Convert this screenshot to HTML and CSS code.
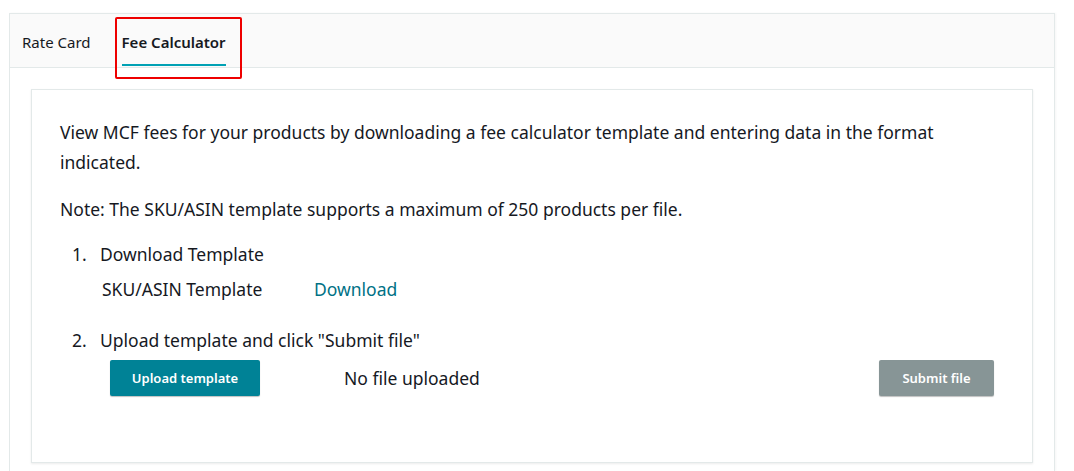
FILE: index.html
```html
<!DOCTYPE html>
<html>
<head>
<meta charset="utf-8">
<link rel="stylesheet" href="styles.css">
</head>
<body>
<div class="card">
  <div class="tabs">
    <div class="tab">Rate Card</div>
    <div class="tab active">Fee Calculator</div>
  </div>
  <div class="panel">
    <div class="box">
      <p class="intro">View MCF fees for your products by downloading a fee calculator template and entering data in the format indicated.</p>
      <p class="note">Note: The SKU/ASIN template supports a maximum of 250 products per file.</p>
      <div class="step">
        <span class="num">1.</span><span>Download Template</span>
      </div>
      <div class="tpl-row">
        <span class="tpl-name">SKU/ASIN Template</span>
        <a class="link">Download</a>
      </div>
      <div class="step step2">
        <span class="num">2.</span><span>Upload template and click "Submit file"</span>
      </div>
      <div class="upload-row">
        <button class="btn primary">Upload template</button>
        <span class="nofile">No file uploaded</span>
        <button class="btn disabled">Submit file</button>
      </div>
    </div>
  </div>
</div>
</body>
</html>
```
FILE: styles.css
```css
* { box-sizing: border-box; }
html, body { margin: 0; padding: 0; background: #fff; }
body {
  font-family: "Noto Sans", "Open Sans", sans-serif;
  color: #16191f;
  height: 471px;
  overflow: hidden;
}
.card {
  margin: 13px 19px 0 9px;
  border: 1px solid #e3e9e9;
  border-bottom: none;
  box-shadow: 1px 0 2px rgba(0,0,0,0.04);
  height: 458px;
  overflow: hidden;
}
.tabs {
  height: 54px;
  background: #fafafa;
  border-bottom: 1px solid #e3e9e9;
  display: flex;
  align-items: flex-start;
  padding-left: 12px;
  gap: 31px;
}
.tab {
  font-size: 15px;
  line-height: 20px;
  padding-top: 18px;
  height: 53px;
  color: #16191f;
  position: relative;
}
.tab.active {
  font-weight: 600;
}
.tab.active::before {
  content: "";
  position: absolute;
  left: 0;
  right: 0;
  top: 50px;
  height: 2px;
  background: #00a1b4;
}
.tab.active::after {
  content: "";
  position: absolute;
  left: -7px;
  top: 3px;
  width: 123px;
  height: 58px;
  border: 2px solid #ee0000;
  border-radius: 2px;
  pointer-events: none;
}
.panel {
  padding: 21px 21px 0 21px;
}
.box {
  border: 1px solid #e3e9e9;
  box-shadow: 0 1px 2px rgba(0,0,0,0.08);
  height: 374px;
  padding: 27px 28px 0 28px;
  font-size: 17.5px;
}
.box p { margin: 0; line-height: 30px; }
.note { margin-top: 17px !important; }
.step {
  display: flex;
  margin-top: 15px;
  line-height: 30px;
  padding-left: 12px;
}
.num { width: 28px; }
.tpl-row {
  display: flex;
  line-height: 30px;
  padding-left: 42px;
  margin-top: 5px;
}
.tpl-name { width: 212px; }
.link { color: #007185; cursor: pointer; }
.step2 { margin-top: 21px; }
.upload-row {
  display: flex;
  align-items: center;
  padding-left: 50px;
  margin-top: 5px;
  padding-right: 10px;
}
.btn {
  font-family: inherit;
  font-size: 13px;
  font-weight: 600;
  color: #fff;
  border: none;
  border-radius: 2px;
  height: 36px;
  box-shadow: 0 1px 1px rgba(0,0,0,0.25);
}
.primary { background: #008296; width: 150px; }
.disabled { background: #879596; width: 115px; margin-left: auto; }
.nofile { margin-left: 84px; }
```
